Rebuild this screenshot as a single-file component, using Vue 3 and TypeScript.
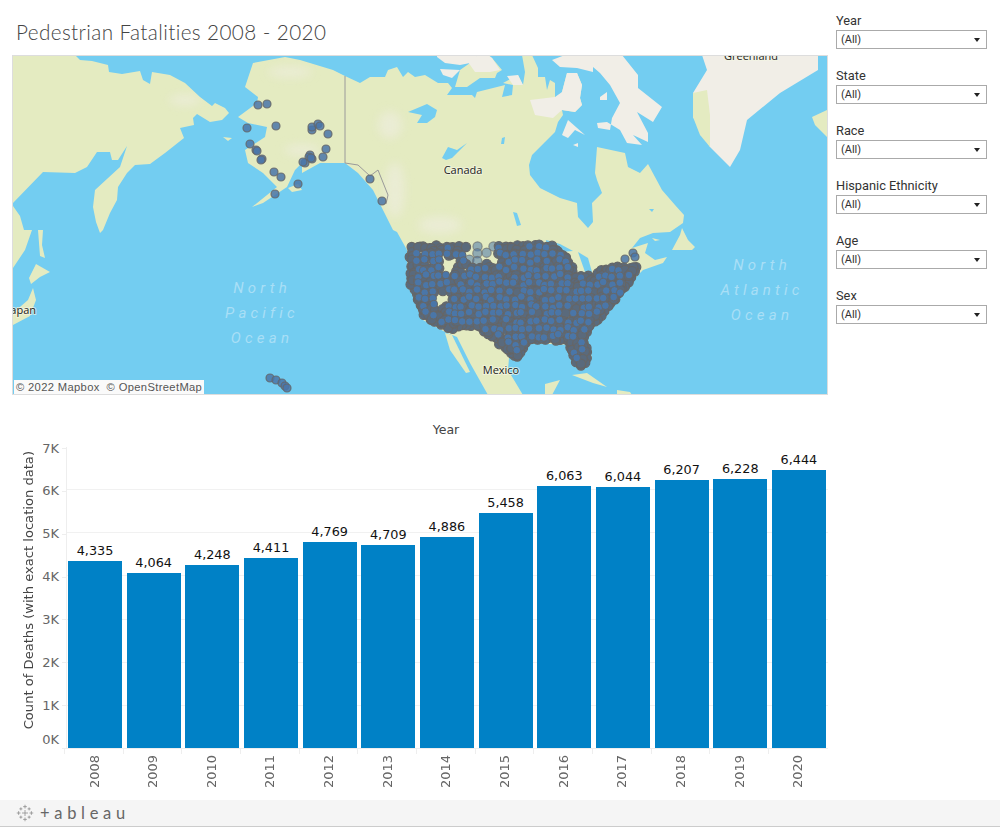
<script setup lang="ts">
type Pt = [number, number];

const filters = ["Year", "State", "Race", "Hispanic Ethnicity", "Age", "Sex"];

const deaths = [
  { year: 2008, count: 4335 },
  { year: 2009, count: 4064 },
  { year: 2010, count: 4248 },
  { year: 2011, count: 4411 },
  { year: 2012, count: 4769 },
  { year: 2013, count: 4709 },
  { year: 2014, count: 4886 },
  { year: 2015, count: 5458 },
  { year: 2016, count: 6063 },
  { year: 2017, count: 6044 },
  { year: 2018, count: 6207 },
  { year: 2019, count: 6228 },
  { year: 2020, count: 6444 },
];
const ticks = ["7K", "6K", "5K", "4K", "3K", "2K", "1K", "0K"];
const pxPerDeath = 43.15 / 1000;

// map shapes, in page coordinates (the svg viewBox matches the page)
const land = [
  "M13,55 L75,55 80,60 92,61 108,65 109,72 122,74 140,71 143,80 150,84 152,72 170,75 185,83 200,97 212,106 215,103 225,108 229,113 222,120 210,122 197,114 193,118 194,125 180,128 184,138 165,153 150,164 135,165 127,173 118,187 117,200 110,213 103,230 100,233 96,222 93,207 95,190 120,167 127,146 118,160 112,160 110,152 97,152 87,167 75,173 43,172 13,203 Z",
  "M13,206 L20,216 24,230 32,230 25,250 13,268 Z",
  "M38,230 L43,230 42,245 45,258 40,256 Z",
  "M36,264 L50,272 40,277 31,284 29,278 Z",
  "M33,288 L36,300 30,316 13,325 13,313 28,300 Z",
  // north america
  "M285,57 L300,60 333,70 345,76 360,83 370,77 385,77 388,70 397,67 403,77 408,72 415,77 425,75 438,83 448,83 452,88 447,95 472,95 475,98 477,92 505,85 502,97 512,95 513,85 503,83 518,75 523,85 525,72 522,55 532,55 538,68 538,77 545,77 547,90 550,80 555,83 555,97 560,100 562,92 567,73 577,73 582,85 580,98 582,105 575,112 562,110 563,115 558,122 555,132 545,142 532,155 529,165 530,175 540,188 560,198 577,203 578,217 588,228 593,222 592,203 602,193 597,180 595,173 597,147 625,153 628,167 640,173 648,164 655,177 662,190 675,205 684,215 683,223 670,232 653,233 640,238 632,248 648,243 645,253 655,260 667,257 663,263 643,270 630,283 607,313 585,333 592,358 580,371 572,345 527,343 517,350 509,358 508,370 523,395 488,395 470,363 457,337 447,333 423,320 408,283 407,250 397,232 393,230 383,210 373,190 358,173 345,163 320,163 302,173 302,163 295,170 287,187 263,203 252,207 277,187 263,173 248,163 245,150 265,137 267,127 248,123 238,117 257,103 258,97 245,87 253,63 Z",
  "M445,333 L452,335 470,372 466,373 450,350 Z",
  "M682,228 L688,240 695,247 692,250 672,250 680,235 Z",
  "M652,238 L660,240 655,241 Z",
  "M572,375 L587,373 607,387 593,383 Z",
  "M545,384 L560,380 552,395 545,395 Z",
  "M617,390 L630,392 632,395 617,395 Z",
  "M812,117 L827,110 827,137 815,125 Z",
  "M288,188 L298,184 302,190 292,192 Z",
  "M223,137 L232,138 228,141 Z",
  // victoria island
  "M460,70 L455,87 467,87 480,78 495,78 497,73 502,70 492,58 488,55 478,55 470,63 Z",
];
const ice = [
  "M702,55 L818,55 818,70 780,93 747,120 740,150 730,167 710,147 693,117 693,93 707,70 Z",
  // baffin
  "M552,60 L565,55 622,55 638,75 638,88 662,107 653,122 637,112 648,133 648,142 633,135 642,145 627,143 620,130 607,122 597,123 598,128 610,130 612,118 620,103 610,85 600,73 593,67 593,72 577,68 560,67 Z",
  "M530,100 L555,97 562,92 567,73 577,73 582,85 580,98 582,105 575,112 562,110 553,118 535,115 Z",
  "M437,57 L445,63 460,65 470,63 478,55 437,55 Z",
  "M440,69 L460,70 452,78 443,75 Z",
  "M468,62 L478,55 488,55 492,58 500,70 490,72 475,72 Z",
  "M562,135 L568,120 585,135 575,130 568,138 Z",
  "M600,97 L607,92 607,100 600,100 Z",
  "M573,145 L578,143 578,147 Z",
  "M507,76 L518,75 523,85 513,85 Z",
];
const water = [
  "M408,112 L427,104 437,110 435,117 427,123 417,123 422,115 Z",
  "M442,158 L448,147 457,150 467,143 458,152 452,158 446,160 Z",
  "M502,138 L505,137 504,144 501,144 Z",
  "M649,209 L654,209 652,212 Z",
  "M513,212 L517,213 521,225 517,226 Z",
  "M546,240 L560,244 573,251 560,252 548,250 Z",
  "M578,252 L588,258 592,272 585,272 Z",
];
const greenPatch = "M693,93 L707,90 710,115 710,147 700,135 693,117 Z";
const alaskaBorder = "M345,76 L345,163 L358,165 L370,176 L378,170 L388,195 L386,204";

const alaskaDots: Pt[] = [
  [258, 105], [267, 104], [247, 128], [276, 126], [312, 130], [312, 127], [318, 124], [320, 126],
  [328, 134], [250, 144], [256, 150], [257, 151], [262, 159], [261, 160], [274, 172], [281, 177],
  [298, 184], [275, 194], [326, 149], [323, 157], [310, 155], [309, 157], [305, 163], [303, 162],
  [312, 159], [311, 158], [370, 179], [382, 201], [270, 378], [276, 380], [282, 383], [285, 386], [287, 388],
  [625, 259], [633, 253], [635, 257],
];

const usOutline: Pt[] = [
  [413, 247], [552, 246], [566, 258], [576, 276], [593, 277], [607, 269], [636, 267],
  [626, 286], [605, 311], [590, 326], [583, 336], [588, 358], [580, 366], [572, 350], [567, 339],
  [527, 339], [518, 357], [508, 350], [492, 336], [477, 325], [447, 328], [425, 316], [412, 283], [411, 252],
];
const gaps: { x: number; y: number; r: number }[] = [
  { x: 449, y: 265, r: 9 },
  { x: 442, y: 300, r: 7 },
  { x: 462, y: 250, r: 3.5 },
  { x: 498, y: 260, r: 3.5 },
];

function inside(x: number, y: number, poly: Pt[]) {
  let hit = false;
  for (let i = 0, j = poly.length - 1; i < poly.length; j = i++) {
    const [xi, yi] = poly[i];
    const [xj, yj] = poly[j];
    if (yi > y !== yj > y && x < ((xj - xi) * (y - yi)) / (yj - yi) + xi) hit = !hit;
  }
  return hit;
}

// fixed seed so the scatter is the same on every load
let seed = 20200;
const rand = () => {
  seed = (seed * 1664525 + 1013904223) % 4294967296;
  return seed / 4294967296;
};

const usDots: { x: number; y: number; faded: boolean }[] = [];
const topDots: Pt[] = [];

function addDot(px: number, py: number) {
  if (gaps.some((g) => Math.hypot(px - g.x, py - g.y) < g.r)) return;
  const sparse = px > 466 && px < 498 && py < 262;
  if (sparse && rand() < 0.6) return;
  usDots.push({ x: px, y: py, faded: sparse });
}
// points along the border first, a little uneven like the real coast
usOutline.forEach((a, i) => {
  const b = usOutline[(i + 1) % usOutline.length];
  const steps = Math.ceil(Math.hypot(b[0] - a[0], b[1] - a[1]) / 6);
  for (let s = 0; s < steps; s++) {
    addDot(
      a[0] + ((b[0] - a[0]) * s) / steps + rand() * 3 - 1.5,
      a[1] + ((b[1] - a[1]) * s) / steps + rand() * 3 - 1.5,
    );
  }
});
for (let y = 244; y < 372; y += 5.5) {
  for (let x = 408; x < 642; x += 5.5) {
    const px = x + rand() * 5 - 2.5;
    const py = y + rand() * 5 - 2.5;
    if (inside(px, py, usOutline)) addDot(px, py);
  }
}
// the blue discs that stay visible on top of the grey mass
for (let y = 246; y < 372; y += 7.5) {
  for (let x = 410; x < 642; x += 7.5) {
    const px = x + rand() * 4 - 2;
    const py = y + rand() * 4 - 2;
    const blocked = gaps.some((g) => Math.hypot(px - g.x, py - g.y) < g.r + 1);
    const sparse = px > 466 && px < 498 && py < 262;
    if (inside(px, py, usOutline) && !blocked && !sparse && rand() > 0.08) topDots.push([px, py]);
  }
}

const logoPlus = [
  { x: 12, y: 12, s: 4 },
  { x: 12, y: 3.5, s: 2.5 },
  { x: 12, y: 20.5, s: 2.5 },
  { x: 3.5, y: 12, s: 2.5 },
  { x: 20.5, y: 12, s: 2.5 },
  { x: 6.5, y: 6.5, s: 2 },
  { x: 17.5, y: 6.5, s: 2 },
  { x: 6.5, y: 17.5, s: 2 },
  { x: 17.5, y: 17.5, s: 2 },
];
</script>

<template>
  <div class="page">
    <div class="dashboard">
      <main class="content">
        <h1 class="title">Pedestrian Fatalities 2008 - 2020</h1>

        <div class="map">
          <svg class="map-svg" width="814" height="338" viewBox="13 56 814 338">
            <rect x="13" y="56" width="814" height="338" fill="#73cdf1" />
            <defs>
              <filter id="soft"><feGaussianBlur stdDeviation="5" /></filter>
              <clipPath id="land-clip">
                <path v-for="d in land" :key="d" :d="d" />
              </clipPath>
            </defs>
            <path v-for="d in land" :key="d" :d="d" fill="#e4ebc1" />
            <g clip-path="url(#land-clip)">
              <g filter="url(#soft)" fill="#f1eee7" opacity="0.5">
                <ellipse cx="302" cy="150" rx="18" ry="6" />
                <ellipse cx="395" cy="190" rx="10" ry="28" />
                <ellipse cx="390" cy="125" rx="12" ry="14" />
                <ellipse cx="440" cy="225" rx="22" ry="9" />
                <ellipse cx="290" cy="72" rx="22" ry="6" />
                <ellipse cx="185" cy="100" rx="16" ry="6" />
              </g>
            </g>
            <path v-for="d in ice" :key="d" :d="d" fill="#f1eee7" />
            <path :d="greenPatch" fill="#e4ebc1" />
            <path v-for="d in water" :key="d" :d="d" fill="#73cdf1" />
            <path :d="alaskaBorder" fill="none" stroke="#9a9a9a" stroke-width="1" />

            <text class="ocean" text-anchor="middle">
              <tspan x="262" y="293">North</tspan>
              <tspan x="262" y="318">Pacific</tspan>
              <tspan x="262" y="343">Ocean</tspan>
            </text>
            <text class="ocean" text-anchor="middle">
              <tspan x="762" y="270">North</tspan>
              <tspan x="762" y="295">Atlantic</tspan>
              <tspan x="762" y="320">Ocean</tspan>
            </text>
            <text class="place" x="463" y="174" text-anchor="middle">Canada</text>
            <text class="place" x="501" y="374" text-anchor="middle">Mexico</text>
            <text class="place" x="751" y="60" text-anchor="middle">Greenland</text>
            <text class="place" x="36" y="314" text-anchor="end">Japan</text>

            <circle
              v-for="(dot, i) in usDots"
              :key="i"
              class="dot"
              :class="{ faded: dot.faded }"
              :cx="dot.x"
              :cy="dot.y"
              r="4.6"
            />
            <circle v-for="(p, i) in topDots" :key="'top' + i" class="dot top" :cx="p[0]" :cy="p[1]" r="3.8" />
            <circle v-for="(p, i) in alaskaDots" :key="'ak' + i" class="dot single" :cx="p[0]" :cy="p[1]" r="4" />
          </svg>
          <div class="attribution">© 2022 Mapbox &nbsp;© OpenStreetMap</div>
        </div>

        <section class="chart">
          <div class="chart-head">Year</div>
          <div class="chart-body">
            <div class="y-title"><span>Count of Deaths (with exact location data)</span></div>
            <div class="y-ticks">
              <div v-for="t in ticks" :key="t" class="y-tick">
                <span>{{ t }}</span><i></i>
              </div>
            </div>
            <div class="plot-wrap">
              <div class="plot">
                <div v-for="d in deaths" :key="d.year" class="bar-col">
                  <div class="bar-label">{{ d.count.toLocaleString("en-US") }}</div>
                  <div class="bar" :style="{ height: d.count * pxPerDeath + 'px' }"></div>
                </div>
              </div>
              <div class="x-axis">
                <div v-for="d in deaths" :key="d.year" class="x-label"><span>{{ d.year }}</span></div>
              </div>
            </div>
          </div>
        </section>
      </main>

      <aside class="filters">
        <div v-for="f in filters" :key="f" class="filter">
          <label class="filter-label">{{ f }}</label>
          <div class="select">
            <span>(All)</span>
            <i class="caret"></i>
          </div>
        </div>
      </aside>
    </div>

    <footer class="footer">
      <svg class="logo" width="18" height="18" viewBox="0 0 24 24">
        <g stroke="#888" stroke-width="1" fill="none">
          <path
            v-for="p in logoPlus"
            :key="p.x + '-' + p.y"
            :d="`M${p.x - p.s} ${p.y}H${p.x + p.s}M${p.x} ${p.y - p.s}V${p.y + p.s}`"
          />
        </g>
      </svg>
      <span class="wordmark">+ableau</span>
    </footer>
  </div>
</template>

<style>
html,
body {
  margin: 0;
  background: #fff;
}
</style>

<style scoped>
.page {
  width: 1000px;
  height: 827px;
  display: flex;
  flex-direction: column;
  overflow: hidden;
  background: #fff;
}
.dashboard {
  flex: 1;
  display: flex;
  min-height: 0;
}
.content {
  width: 816px;
  margin-left: 12px;
}
.title {
  height: 55px;
  margin: 0;
  padding: 20px 0 0 4px;
  box-sizing: border-box;
  font: 300 20.7px/24px Lato, "Open Sans", sans-serif;
  letter-spacing: 0.4px;
  color: #444;
}
.map {
  position: relative;
  height: 340px;
  border: 1px solid #ddd;
  box-sizing: border-box;
  overflow: hidden;
}
.map-svg {
  display: block;
}
.ocean {
  font: italic 400 15px Roboto, sans-serif;
  letter-spacing: 4.2px;
  fill: #a9dff6;
}
.place {
  font: 400 11px "Open Sans", sans-serif;
  fill: #1c1c1c;
  stroke: #f4f6e4;
  stroke-width: 2px;
  paint-order: stroke;
  stroke-opacity: 0.7;
}
.dot {
  fill: #5a6a7c;
  stroke: #666;
  stroke-width: 1.2;
}
.dot.top {
  fill: #4a76a8;
  stroke-width: 0.9;
}
.dot.single {
  fill: #4a76a8;
  fill-opacity: 0.85;
  stroke-opacity: 0.85;
  stroke-width: 1.2;
}
.dot.faded {
  fill: #4a76a8;
  fill-opacity: 0.55;
  stroke-opacity: 0.6;
}
.attribution {
  position: absolute;
  left: 1px;
  bottom: 0;
  padding: 0 2px;
  height: 14px;
  background: #fafafa;
  font: 11.2px/14px "Liberation Sans", Arial, sans-serif;
  letter-spacing: 0.35px;
  white-space: nowrap;
  color: #555;
}
.chart {
  padding-top: 27px;
}
.chart-head {
  height: 25px;
  text-align: center;
  font: 12.5px/16px "DejaVu Sans", sans-serif;
  color: #444;
  width: 868px;
}
.chart-body {
  display: flex;
}
.y-title {
  width: 25px;
  height: 302px;
  margin-left: 4px;
  margin-right: -1px;
  padding-bottom: 15px;
  box-sizing: border-box;
  display: flex;
  align-items: center;
  justify-content: center;
}
.y-title span {
  writing-mode: vertical-rl;
  transform: rotate(180deg);
  white-space: nowrap;
  font: 13.1px/16px "DejaVu Sans", sans-serif;
  color: #444;
}
.y-ticks {
  width: 26px;
  height: 301px;
  display: flex;
  flex-direction: column;
  justify-content: space-between;
  padding-top: 1px;
}
.y-tick {
  height: 1px;
  display: flex;
  align-items: center;
  justify-content: flex-end;
  gap: 3px;
  font: 13px/16px "DejaVu Sans", sans-serif;
  color: #666;
}
.y-tick span {
  line-height: 16px;
}
.y-tick:last-child span {
  transform: translateY(-8px);
}
.y-tick i {
  width: 4px;
  height: 1px;
  background: #eee;
}
.plot-wrap {
  flex: 1;
  min-width: 0;
}
.plot {
  height: 302px;
  box-sizing: border-box;
  display: flex;
  align-items: flex-end;
  gap: 4.67px;
  padding: 0 2px 0 1px;
  border-left: 1px solid #eee;
  border-bottom: 1px solid #eee;
  background: repeating-linear-gradient(
    to top,
    transparent 0,
    transparent 42.15px,
    #f1f1f1 42.15px,
    #f1f1f1 43.15px
  );
}
.bar-col {
  width: 54px;
  flex: none;
  display: flex;
  flex-direction: column;
  align-items: center;
}
.bar {
  width: 100%;
  background: #0081c6;
}
.bar-label {
  font: 12.8px/15px "DejaVu Sans", sans-serif;
  color: #111;
  margin-bottom: 3px;
}
.x-axis {
  display: flex;
  gap: 4.67px;
  padding: 5px 2px 0 1px;
  height: 42px;
  box-sizing: border-box;
}
.x-label {
  position: relative;
  width: 54px;
  flex: none;
  display: flex;
  justify-content: center;
  padding-left: 1px;
  box-sizing: border-box;
}
.x-label::before {
  content: "";
  position: absolute;
  left: -3px;
  top: -5px;
  width: 1px;
  height: 5px;
  background: #eee;
}
.x-label span {
  writing-mode: vertical-rl;
  transform: rotate(180deg);
  height: 34px;
  text-align: left;
  font: 13px/16px "DejaVu Sans", sans-serif;
  color: #666;
}
.filters {
  margin-left: 8px;
  width: 151px;
  padding-top: 13px;
  display: flex;
  flex-direction: column;
  gap: 19px;
}
.filter {
  height: 36px;
}
.filter-label {
  display: block;
  height: 17px;
  font: 12.8px/15px Roboto, sans-serif;
  color: #333;
}
.select {
  height: 19px;
  box-sizing: border-box;
  border: 1px solid #aaa;
  padding: 0 4px;
  display: flex;
  align-items: center;
  justify-content: space-between;
  font: 11px/17px Roboto, sans-serif;
  color: #333;
}
.caret {
  width: 0;
  height: 0;
  border-left: 3.5px solid transparent;
  border-right: 3.5px solid transparent;
  border-top: 4px solid #222;
  margin-right: 2px;
}
.footer {
  height: 27px;
  box-sizing: border-box;
  background: #f5f5f5;
  border-bottom: 1px solid #ccc;
  display: flex;
  align-items: center;
  padding-left: 16px;
  gap: 6px;
}
.logo {
  flex: none;
}
.wordmark {
  font: 400 16.5px/20px Lato, sans-serif;
  letter-spacing: 4.7px;
  color: #666;
}
</style>
